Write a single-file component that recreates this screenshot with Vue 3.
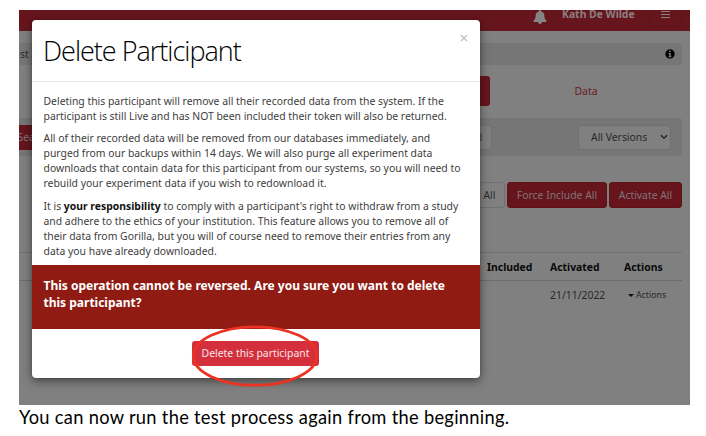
<script setup>
const paragraphs = [
  ['Deleting this participant will remove all their recorded data from the system. If the', 'participant is still Live and has NOT been included their token will also be returned.'],
  ['All of their recorded data will be removed from our databases immediately, and', 'purged from our backups within 14 days. We will also purge all experiment data', 'downloads that contain data for this participant from our systems, so you will need to', 'rebuild your experiment data if you wish to redownload it.'],
]
</script>

<template>
  <main class="document">
    <section class="shot">
      <div class="page">
        <header class="topbar">
          <svg class="bell" viewBox="0 0 14 14"><path d="M7 0c.7 0 1.100.4 1.100 1v.5c2.100.5 3.300 2.100 3.300 4.300 0 2.600.7 3.500 1.700 4.400.8.8.3 1.800-.6 1.800H1.500c-.9 0-1.400-1-.6-1.800 1-.9 1.700-1.800 1.700-4.400 0-2.200 1.200-3.800 3.300-4.300V1c0-.6.4-1 1.100-1zM5 12h4c0 1.200-.9 1.900-2 1.900S5 13.200 5 12z" /></svg>
          <span class="user">Kath De Wilde</span>
          <span class="menu"><i></i><i></i><i></i></span>
        </header>
        <div class="crumb">
          <span class="st">st</span>
          <svg class="info" viewBox="0 0 10 10"><circle cx="5" cy="5" r="4.700" fill="#000" /><path d="M4.100 1.600h1.600v1.300H4.100zM3.600 3.900h2.100v3.300h.7v1H3.600v-1h.6V4.900h-.6z" fill="#808080" /></svg>
        </div>
        <nav class="tabs"><span class="tab-active"></span><span class="tab">Data</span></nav>
        <div class="filters">
          <span class="btn search"><span>Sea</span></span>
          <span class="btn plain field">d</span>
          <span class="btn plain versions">All Versions
            <svg viewBox="0 0 8 6"><path d="M1 1.200l3 3 3-3" fill="none" stroke="#1c1c1c" stroke-width="1.300" /></svg>
          </span>
        </div>
        <div class="bulk">
          <span class="btn plain reject">All</span>
          <span class="btn red force">Force Include All</span>
          <span class="btn red activate">Activate All</span>
        </div>
        <div class="table">
          <div class="row head"><span>Included</span><span>Activated</span><span>Actions</span></div>
          <div class="row"><span></span><span>21/11/2022</span><span class="act"><i></i>Actions</span></div>
        </div>
      </div>

      <div class="modal">
        <div class="modal-head"><h1>Delete Participant</h1><span class="close"><svg viewBox="0 0 8 8"><path d="M1 1l6 6M7 1l-6 6" /></svg></span></div>
        <div class="modal-body">
          <p v-for="(p, i) in paragraphs" :key="i"><span v-for="l in p" :key="l">{{ l }}</span></p>
          <p>
            <span>It is <b>your responsibility</b> to comply with a participant's right to withdraw from a study</span>
            <span>and adhere to the ethics of your institution. This feature allows you to remove all of</span>
            <span>their data from Gorilla, but you will of course need to remove their entries from any</span>
            <span>data you have already downloaded.</span>
          </p>
        </div>
        <div class="warning">This operation cannot be reversed. Are you sure you want to delete<br>this participant?</div>
        <div class="modal-foot"><span class="delete">Delete this participant</span></div>
      </div>
      <svg class="ring" viewBox="0 0 128 64"><ellipse cx="64" cy="32" rx="61.700" ry="29.200" /></svg>
    </section>
    <p class="caption">You can now run the test process again from the beginning.</p>
  </main>
</template>

<style>
body { margin: 0; background: #fff; }
</style>

<style scoped>
* { box-sizing: border-box; }
.document { width: 706px; height: 436px; padding: 10px 16px 0 19px; overflow: hidden; background: #fff; font-family: "Noto Sans", "Open Sans", sans-serif; }
.shot { position: relative; width: 671px; height: 395px; overflow: hidden; background: #808080; font-size: 10.400px; white-space: nowrap; }
.page { display: flex; flex-direction: column; color: #292929; }
.topbar { display: flex; justify-content: flex-end; height: 21px; padding-right: 8px; background: #66151d; }
.bell { width: 14px; height: 14px; margin: 0 14px 0 0; fill: #858585; }
.user { width: 74px; height: 16px; margin-right: 14px; padding-left: 1px; line-height: 8px; font-weight: 700; color: #8b8083; }
.menu { display: flex; flex-direction: column; gap: 2px; width: 33px; height: 17px; padding: 0 11px; border: 1px solid #5e131b; border-top: 0; border-radius: 0 0 4px 4px; }
.menu i { height: 1px; background: #8b8083; flex: none; }
.menu i:first-child { margin-top: 1px; }
.crumb { display: flex; align-items: center; justify-content: space-between; height: 22px; margin: 12px 8px 0 0; padding: 0 7px 0 1px; background: #767676; border-radius: 0 3px 3px 0; }
.info { width: 10px; height: 10px; }
.tabs { display: flex; align-items: center; height: 30px; margin-top: 11px; }
.tab-active { width: 471px; height: 30px; background: linear-gradient(90deg, transparent 440px, #66151d 440px); border-radius: 3px; }
.tab { margin-left: 84.500px; color: #6b1c26; }
.filters { display: flex; align-items: center; height: 38px; margin: 12px 8px 0 0; padding-right: 11px; background: #767676; border-radius: 0 3px 3px 0; }
.btn { display: flex; align-items: center; height: 26px; flex: none; border-radius: 3px; }
.search { width: 40px; height: 25px; overflow: hidden; background: #66151d; color: #80777a; border-radius: 0; }
.search span { margin-left: -1.500px; }
.plain { border: 1px solid #707070; background: #808080; color: #292929; }
.field { width: 80px; height: 25px; margin-left: 353px; padding-right: 8.500px; justify-content: flex-end; color: #394650; }
.versions { width: 93px; height: 25px; margin-left: auto; padding: 0 2px 0 12px; justify-content: space-between; }
.versions svg { width: 8px; height: 6px; }
.bulk { display: flex; justify-content: flex-end; gap: 2px; margin: 26px 8px 0 0; }
.red { justify-content: center; background: #66151d; color: #807477; border: 1px solid #611017; }
.reject { width: 75px; justify-content: flex-end; padding-right: 8.500px; }
.force { width: 100px; }
.activate { width: 73px; }
.table { margin: 44px 8px 0 0; border-top: 1px solid #707070; }
.row { display: grid; grid-template-columns: 63px 74px 1fr; align-items: center; height: 28px; padding-left: 468px; }
.row.head { font-weight: 700; color: #0a0a0a; border-bottom: 1px solid #6c6c6c; }
.act { display: flex; align-items: center; gap: 2px; padding-left: 4px; font-size: 8.800px; }
.act i { border: 3px solid transparent; border-top-color: #111; border-bottom: 0; }
.modal { position: absolute; left: 13px; top: 10px; width: 448px; height: 358px; display: flex; flex-direction: column; background: #fff; border-radius: 4px; box-shadow: 0 3px 10px rgba(0, 0, 0, .5), 0 0 1px #333; }
.modal-head { display: flex; justify-content: space-between; height: 62px; padding: 0 12px 0 11px; border-bottom: 1px solid #e9e9e9; }
h1 { margin: 0; font: 300 27px/62px "Open Sans", "Noto Sans", sans-serif; letter-spacing: -1px; color: #000; }
.close svg { display: block; width: 8px; height: 8px; margin-top: 14px; fill: none; stroke: #c4c4c4; stroke-width: 1.500; }
.modal-body { height: 183px; padding: 11.500px 11px 0 11.500px; color: #3d3d3d; }
.modal-body p { margin: 0 0 7.500px; line-height: 15px; }
.modal-body p > span { display: table; }
.modal-body b { color: #111; }
.warning { height: 64px; padding: 13px 11.500px; background: #901b12; color: #fff; font-size: 12px; line-height: 16.600px; font-weight: 700; }
.modal-foot { display: flex; justify-content: center; padding: 11.500px 1px 0 0; }
.delete { display: flex; align-items: center; justify-content: center; width: 127px; height: 25px; background: #d32f3d; border-radius: 3px; color: #fbe6e8; }
.ring { position: absolute; left: 172px; top: 314px; width: 128px; height: 64px; fill: none; stroke: #ea3323; stroke-width: 2.800; }
.caption { margin: 0; font: 18.300px/25px Lato, sans-serif; letter-spacing: .29px; color: #000; white-space: nowrap; }
</style>
